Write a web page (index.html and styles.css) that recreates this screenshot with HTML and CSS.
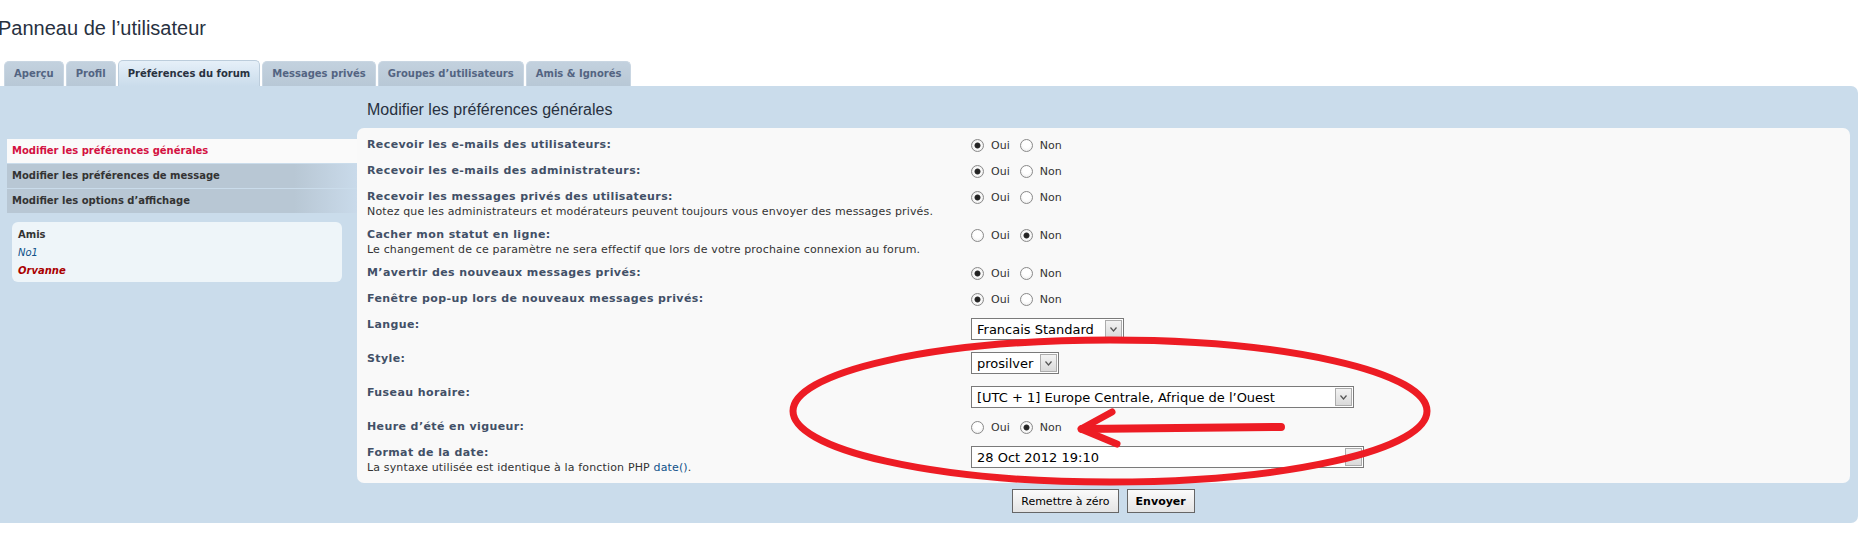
FILE: index.html
```html
<!DOCTYPE html>
<html>
<head>
  <meta charset="utf-8">
  <link rel="stylesheet" href="styles.css">
</head>
<body>
  <h1 class="page-title">Panneau de l’utilisateur</h1>

  <div class="tabs">
    <a class="tab">Aperçu</a>
    <a class="tab">Profil</a>
    <a class="tab active">Préférences du forum</a>
    <a class="tab">Messages privés</a>
    <a class="tab">Groupes d’utilisateurs</a>
    <a class="tab">Amis &amp; Ignorés</a>
  </div>

  <div class="panel">
    <div class="cp-menu">
      <ul class="cp-nav">
        <li class="active">Modifier les préférences générales</li>
        <li>Modifier les préférences de message</li>
        <li>Modifier les options d’affichage</li>
      </ul>
      <div class="friends">
        <div class="friends-title">Amis</div>
        <div class="friend">No1</div>
        <div class="friend admin">Orvanne</div>
      </div>
    </div>

    <div class="cp-main">
      <h2>Modifier les préférences générales</h2>
      <div class="form-box">
        <div class="row">
          <div class="row-label"><div class="label-text">Recevoir les e-mails des utilisateurs:</div></div>
          <div class="field">
            <span class="option"><span class="radio checked"></span>Oui</span>
            <span class="option"><span class="radio"></span>Non</span>
          </div>
        </div>
        <div class="row">
          <div class="row-label"><div class="label-text">Recevoir les e-mails des administrateurs:</div></div>
          <div class="field">
            <span class="option"><span class="radio checked"></span>Oui</span>
            <span class="option"><span class="radio"></span>Non</span>
          </div>
        </div>
        <div class="row">
          <div class="row-label">
            <div class="label-text">Recevoir les messages privés des utilisateurs:</div>
            <div class="explain">Notez que les administrateurs et modérateurs peuvent toujours vous envoyer des messages privés.</div>
          </div>
          <div class="field">
            <span class="option"><span class="radio checked"></span>Oui</span>
            <span class="option"><span class="radio"></span>Non</span>
          </div>
        </div>
        <div class="row">
          <div class="row-label">
            <div class="label-text">Cacher mon statut en ligne:</div>
            <div class="explain">Le changement de ce paramètre ne sera effectif que lors de votre prochaine connexion au forum.</div>
          </div>
          <div class="field">
            <span class="option"><span class="radio"></span>Oui</span>
            <span class="option"><span class="radio checked"></span>Non</span>
          </div>
        </div>
        <div class="row">
          <div class="row-label"><div class="label-text">M’avertir des nouveaux messages privés:</div></div>
          <div class="field">
            <span class="option"><span class="radio checked"></span>Oui</span>
            <span class="option"><span class="radio"></span>Non</span>
          </div>
        </div>
        <div class="row">
          <div class="row-label"><div class="label-text">Fenêtre pop-up lors de nouveaux messages privés:</div></div>
          <div class="field">
            <span class="option"><span class="radio checked"></span>Oui</span>
            <span class="option"><span class="radio"></span>Non</span>
          </div>
        </div>
        <div class="row">
          <div class="row-label"><div class="label-text">Langue:</div></div>
          <div class="field select-field">
            <div class="select select-lang">Francais Standard<span class="arrow"><svg width="7" height="5" viewBox="0 0 7 5"><path d="M0.5 0.5 L3.5 4 L6.5 0.5" fill="none" stroke="#555" stroke-width="1.2"/></svg></span></div>
          </div>
        </div>
        <div class="row">
          <div class="row-label"><div class="label-text">Style:</div></div>
          <div class="field select-field">
            <div class="select select-style">prosilver<span class="arrow"><svg width="7" height="5" viewBox="0 0 7 5"><path d="M0.5 0.5 L3.5 4 L6.5 0.5" fill="none" stroke="#555" stroke-width="1.2"/></svg></span></div>
          </div>
        </div>
        <div class="row">
          <div class="row-label"><div class="label-text">Fuseau horaire:</div></div>
          <div class="field select-field">
            <div class="select select-tz">[UTC + 1] Europe Centrale, Afrique de l’Ouest<span class="arrow"><svg width="7" height="5" viewBox="0 0 7 5"><path d="M0.5 0.5 L3.5 4 L6.5 0.5" fill="none" stroke="#555" stroke-width="1.2"/></svg></span></div>
          </div>
        </div>
        <div class="row">
          <div class="row-label"><div class="label-text">Heure d’été en vigueur:</div></div>
          <div class="field">
            <span class="option"><span class="radio"></span>Oui</span>
            <span class="option"><span class="radio checked"></span>Non</span>
          </div>
        </div>
        <div class="row">
          <div class="row-label">
            <div class="label-text">Format de la date:</div>
            <div class="explain">La syntaxe utilisée est identique à la fonction PHP <a class="link">date()</a>.</div>
          </div>
          <div class="field select-field">
            <div class="select select-date">28 Oct 2012 19:10<span class="arrow"><svg width="7" height="5" viewBox="0 0 7 5"><path d="M0.5 0.5 L3.5 4 L6.5 0.5" fill="none" stroke="#555" stroke-width="1.2"/></svg></span></div>
          </div>
        </div>
      </div>

      <div class="submit-buttons">
        <button class="button">Remettre à zéro</button>
        <button class="button primary">Envoyer</button>
      </div>
    </div>
  </div>

  <!-- red hand-drawn annotation -->
  <svg class="annotation" width="1859" height="542" viewBox="0 0 1859 542">
    <ellipse cx="1110" cy="411" rx="317" ry="71" fill="none" stroke="#ed1c24" stroke-width="7"/>
    <path d="M1281 427 L1082 429" fill="none" stroke="#ed1c24" stroke-width="8" stroke-linecap="round"/>
    <path d="M1112 412 L1081 429 L1117 444" fill="none" stroke="#ed1c24" stroke-width="7" stroke-linecap="round" stroke-linejoin="round"/>
  </svg>
</body>
</html>
```
FILE: styles.css
```css
body {
  margin: 0;
  position: relative;
  overflow: hidden;
  background: #fff;
  color: #333;
  font-family: "DejaVu Sans", Verdana, sans-serif;
}

.page-title {
  margin: 0 0 0 -2px;
  padding-top: 16px;
  font: normal 20px/24px "Liberation Sans", Arial, sans-serif;
  color: #28313f;
}

/* tabs */
.tabs {
  display: flex;
  align-items: flex-end;
  gap: 2px;
  margin-top: 20px;
  padding-left: 4px;
}

.tab {
  box-sizing: border-box;
  height: 25px;
  line-height: 24px;
  padding: 0 9px;
  font-size: 10px;
  font-weight: bold;
  color: #536482;
  background: linear-gradient(#c3d1de, #b8c8d6);
  border: 1px solid #c9d6e2;
  border-bottom: none;
  border-radius: 5px 5px 0 0;
}

.tab.active {
  height: 26px;
  line-height: 26px;
  color: #28313f;
  background: linear-gradient(#e6f0f9, #cadceb);
  border-color: #bccddc;
}

/* main panel */
.panel {
  display: flex;
  margin-right: 1px;
  padding: 0 8px 10px 7px;
  background: #cadceb;
  border-radius: 0 7px 7px 0;
}

.cp-menu {
  width: 350px;
  flex-shrink: 0;
  padding-top: 53px;
}

.cp-nav {
  list-style: none;
  margin: 0;
  padding: 0;
}

.cp-nav li {
  height: 24px;
  line-height: 24px;
  margin-bottom: 1px;
  padding-left: 5px;
  font-size: 10px;
  font-weight: bold;
  color: #333;
  background: linear-gradient(to right, #b8c7d4 82%, #c9daea);
}

.cp-nav li.active {
  color: #d31141;
  background: #fafafa;
}

.friends {
  margin: 9px 15px 0 5px;
  padding: 4px 6px 2px;
  background: #eef5f9;
  border-radius: 6px;
  font-size: 10px;
  line-height: 18px;
}

.friends-title {
  font-weight: bold;
  color: #333;
}

.friend {
  font-style: italic;
  color: #105289;
}

.friend.admin {
  font-weight: bold;
  color: #aa0000;
}

.cp-main {
  flex: 1;
}

.cp-main h2 {
  margin: 14px 0 8px 10px;
  font: normal 16px/20px "Liberation Sans", Arial, sans-serif;
  color: #28313f;
}

.form-box {
  padding: 4px 10px 5px;
  background: #f9f9f9;
  border-radius: 7px;
}

.row {
  display: flex;
  padding: 4px 0;
}

.row-label {
  width: 604px;
  flex-shrink: 0;
}

.label-text {
  font-size: 11px;
  line-height: 18px;
  font-weight: bold;
  letter-spacing: 0.4px;
  color: #425067;
}

.explain {
  font-size: 11px;
  line-height: 12px;
  letter-spacing: 0.15px;
  color: #333;
}

.link {
  color: #105289;
}

.field {
  display: flex;
  align-items: center;
  height: 18px;
  font-size: 11px;
  color: #333;
}

.field.select-field {
  height: auto;
  align-items: flex-start;
  padding: 2px 0;
}

/* radios */
.option {
  display: inline-flex;
  align-items: center;
  gap: 7px;
  margin-right: 10px;
}

.radio {
  box-sizing: border-box;
  width: 13px;
  height: 13px;
  border: 1px solid #8a8a8a;
  border-radius: 50%;
  background: radial-gradient(circle at 50% 40%, #fff 40%, #e6e6e6);
}

.radio.checked {
  background: radial-gradient(circle, #1f1f1f 0, #2a2a2a 2.6px, #fff 3.4px, #f4f4f4 60%, #e0e0e0);
}

/* selects */
.select {
  box-sizing: border-box;
  display: flex;
  align-items: center;
  justify-content: space-between;
  height: 22px;
  padding-left: 5px;
  border: 1px solid #7a7a7a;
  background: #fff;
  font-size: 13px;
  color: #000;
}

.select-lang { width: 153px; }
.select-style { width: 88px; }
.select-tz { width: 383px; }
.select-date { width: 393px; }

.select .arrow {
  box-sizing: border-box;
  display: flex;
  align-items: center;
  justify-content: center;
  width: 17px;
  height: 18px;
  margin-right: 1px;
  border: 1px solid #acacac;
  background: linear-gradient(#f3f3f3, #dadada);
}

/* buttons */
.submit-buttons {
  display: flex;
  justify-content: center;
  gap: 8px;
  margin-top: 6px;
}

.button {
  box-sizing: border-box;
  height: 24px;
  padding: 0 8px;
  font-family: "DejaVu Sans", Verdana, sans-serif;
  font-size: 11px;
  color: #000;
  background: linear-gradient(#fbfbfb, #e4e4e4);
  border: 1px solid #666;
  border-radius: 0;
}

.button.primary {
  font-weight: bold;
}

.annotation {
  position: absolute;
  left: 0;
  top: 0;
  pointer-events: none;
}
```
